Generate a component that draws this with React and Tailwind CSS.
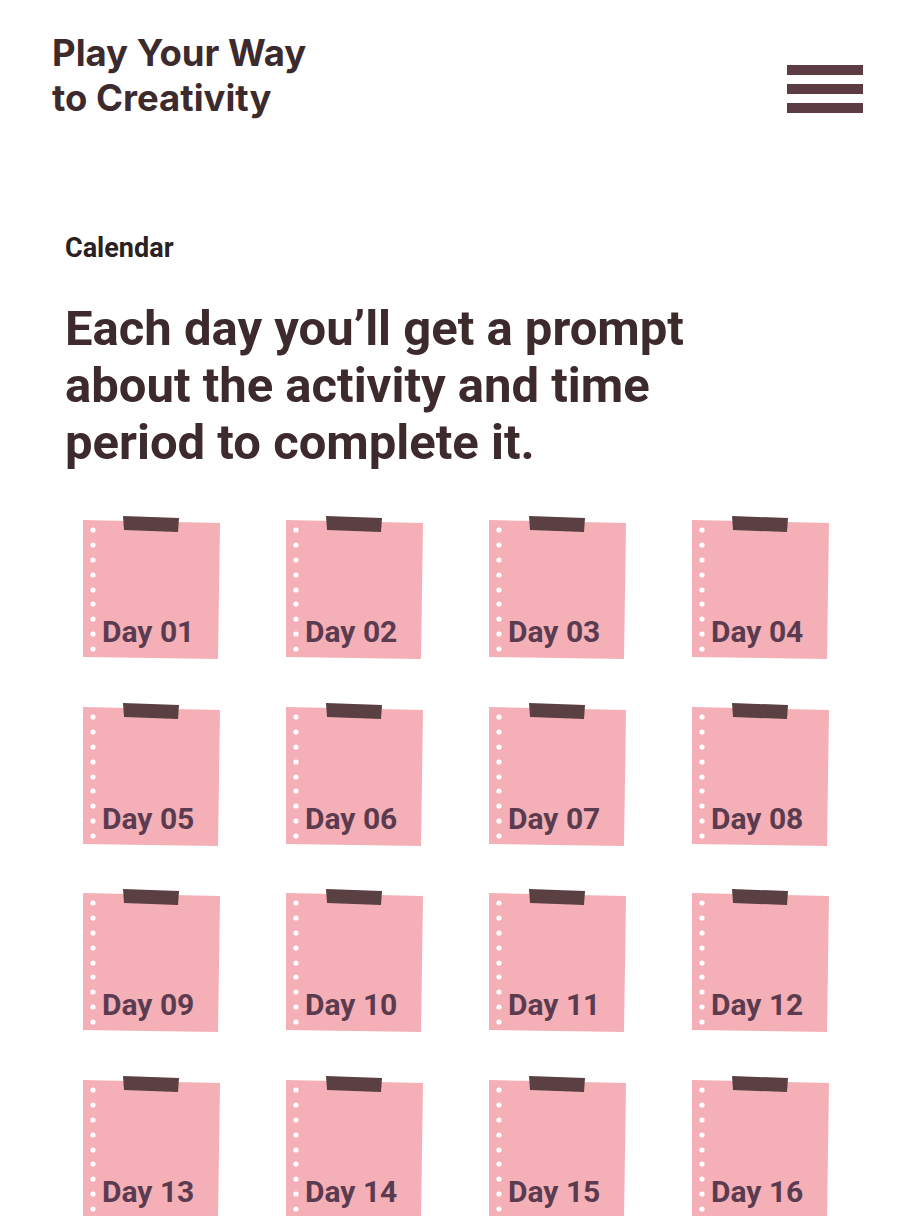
import React from "react";

const days = Array.from({ length: 16 }, (_, i) => String(i + 1).padStart(2, "0"));
const dotYs = [14, 29, 44, 59, 74, 88, 103, 118, 133];

function Note({ day }) {
  return (
    <div className="relative h-[144px] w-[138px]">
      <svg className="absolute inset-0" width="138" height="144" viewBox="0 0 138 144">
        <polygon points="1,4 138,7 136,143 1,141" fill="#f4b0b6" />
        <polygon points="41,0 97,2 96,16 42,14" fill="#5a3f43" />
        {dotYs.map((y) => (
          <circle key={y} cx="11" cy={y} r="2.6" fill="#ffffff" />
        ))}
      </svg>
      <span className="absolute left-[20px] top-[101px] whitespace-nowrap font-['Roboto',sans-serif] text-[30px] font-bold leading-[30px] text-[#5b3b50]">
        Day {day}
      </span>
    </div>
  );
}

export default function App() {
  return (
    <div className="min-h-[1216px] w-[914px] overflow-hidden bg-white">
      <header className="flex items-start justify-between px-[51px] pt-[31px]">
        <h1 className="ml-[1px] font-['Inter',sans-serif] text-[36.5px] font-bold leading-[45px] text-[#3d2a2d]">
          Play Your Way
          <br />
          to Creativity
        </h1>
        <button type="button" className="mt-[34px] flex w-[76px] flex-col gap-[9px]" aria-label="Menu">
          <span className="block h-[10px] w-full bg-[#5a3c42]" />
          <span className="block h-[10px] w-full bg-[#5a3c42]" />
          <span className="block h-[10px] w-full bg-[#5a3c42]" />
        </button>
      </header>

      <main className="px-[65px]">
        <p className="mt-[111px] font-['Roboto',sans-serif] text-[27px] font-bold leading-[32px] text-[#2a2222]">
          Calendar
        </p>
        <h2 className="mt-[36px] font-['Roboto',sans-serif] text-[49px] font-bold leading-[57px] text-[#3d2a2d]">
          Each day you’ll get a prompt
          <br />
          about the activity and time
          <br />
          period to complete it.
        </h2>
      </main>

      <section className="mt-[45px] grid grid-cols-[repeat(4,138px)] gap-x-[65px] gap-y-[42.5px] pl-[82px]">
        {days.map((d) => (
          <Note key={d} day={d} />
        ))}
      </section>
    </div>
  );
}
